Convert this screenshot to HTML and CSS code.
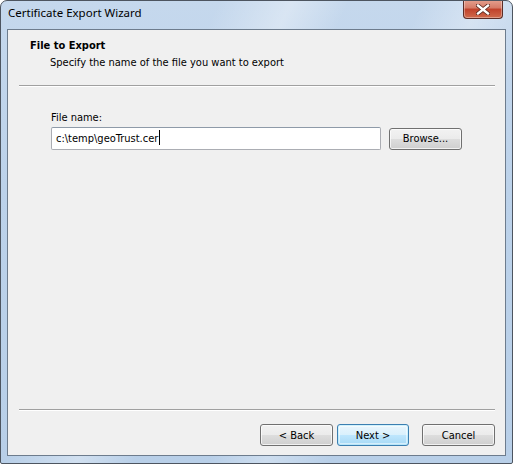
FILE: index.html
```html
<!DOCTYPE html>
<html lang="en">

<head>
    <meta charset="UTF-8">
    <title>Certificate Export Wizard</title>
    <link rel="stylesheet" href="styles.css">
</head>

<body>
    <div class="window">
        <div class="titlebar">
            <span class="title">Certificate Export Wizard</span>
            <button class="close" title="Close">
                <svg width="14" height="11" viewBox="0 0 14 11">
                    <path d="M2 1.5 L12 9.5 M12 1.5 L2 9.5" stroke="#5a2a20" stroke-width="4" stroke-linecap="square"/>
                    <path d="M2 1.5 L12 9.5 M12 1.5 L2 9.5" stroke="#fff" stroke-width="2.3" stroke-linecap="square"/>
                </svg>
            </button>
        </div>
        <div class="client">
            <div class="header">
                <div class="header-title">File to Export</div>
                <div class="header-sub">Specify the name of the file you want to export</div>
            </div>
            <hr class="sep">
            <div class="content">
                <label for="fileName">File name:</label>
                <div class="file-row">
                    <div class="textbox" id="fileName">c:\temp\geoTrust.cer<span class="caret"></span></div>
                    <button class="btn browse">Browse...</button>
                </div>
            </div>
            <hr class="sep">
            <div class="footer">
                <button class="btn">&lt; Back</button>
                <button class="btn default">Next &gt;</button>
                <button class="btn cancel">Cancel</button>
            </div>
        </div>
    </div>
</body>

</html>
```

FILE: styles.css
```css
body {
    margin: 0;
    font-family: "DejaVu Sans Condensed", "DejaVu Sans", sans-serif;
    font-size: 11px;
    color: #000;
}

.window {
    width: 511px;
    height: 462px;
    border: 1px solid #4d5560;
    border-radius: 7px 7px 2px 2px;
    background:
        linear-gradient(115deg, transparent 30%, rgba(255, 255, 255, 0.35) 40%, transparent 48%, transparent 58%, rgba(255, 255, 255, 0.3) 66%, transparent 75%),
        linear-gradient(#c5d8ed, #bcd2ea 40%, #b8cfe8);
    display: flex;
    flex-direction: column;
    overflow: hidden;
}

.titlebar {
    height: 28px;
    display: flex;
    align-items: flex-start;
    justify-content: space-between;
    padding-left: 7px;
    padding-right: 9px;
}

.title {
    font-family: "Noto Sans", "Open Sans", sans-serif;
    font-size: 11.5px;
    margin-top: 4px;
    color: #000;
}

.close {
    width: 40px;
    height: 19px;
    margin-top: -1px;
    padding: 0;
    border: 1px solid #5b2d27;
    border-top: none;
    border-radius: 0 0 4px 4px;
    background: linear-gradient(#e5a190, #d57a66 45%, #c0412a 50%, #cf6a4c 100%);
    box-shadow: inset 0 0 0 1px rgba(255, 255, 255, 0.35);
    display: flex;
    align-items: center;
    justify-content: center;
}

.client {
    flex: 1;
    margin: 0 6px 7px 6px;
    border: 1px solid #6d7c8d;
    background-color: #f0f0f0;
    display: flex;
    flex-direction: column;
}

.header {
    height: 55px;
    padding-left: 22px;
}

.header-title {
    font-weight: bold;
    margin-top: 8px;
    line-height: 16px;
}

.header-sub {
    margin-left: 20px;
    line-height: 17px;
}

.sep {
    margin: 0 10px 0 11px;
    border: none;
    border-top: 1px solid #a0a0a0;
    border-bottom: 1px solid #ffffff;
}

.content {
    flex: 1;
    padding: 23px 0 0 43px;
}

label {
    display: block;
    line-height: 16px;
}

.file-row {
    display: flex;
    align-items: center;
    margin-top: 1px;
}

.textbox {
    width: 324px;
    height: 21px;
    line-height: 21px;
    padding-left: 4px;
    background: #fff;
    border: 1px solid #abadb3;
    border-top-color: #8e9aa8;
    border-radius: 2px;
}

.caret {
    display: inline-block;
    width: 1px;
    height: 15px;
    margin-left: 1px;
    vertical-align: -3px;
    background: #000;
}

.btn {
    width: 73px;
    height: 22px;
    padding: 0;
    font-family: inherit;
    font-size: 11px;
    color: #000;
    border: 1px solid #707070;
    border-radius: 3px;
    background: linear-gradient(#f2f2f2, #ebebeb 50%, #dddddd 51%, #cfcfcf);
    box-shadow: inset 0 0 0 1px rgba(255, 255, 255, 0.7);
}

.browse {
    margin-left: 8px;
}

.footer {
    height: 31px;
    display: flex;
    justify-content: flex-end;
    align-items: flex-start;
    padding: 13px 10px 0 0;
    gap: 4px;
}

.btn.default {
    width: 72px;
    border-color: #3c7fb1;
    background: linear-gradient(#eaf6fd, #d9f0fc 50%, #bee6fd 51%, #a7d9f5);
    box-shadow: inset 0 0 0 1px #48d2fc33, inset 0 0 0 2px rgba(255, 255, 255, 0.5);
}

.btn.cancel {
    margin-left: 9px;
}
```
